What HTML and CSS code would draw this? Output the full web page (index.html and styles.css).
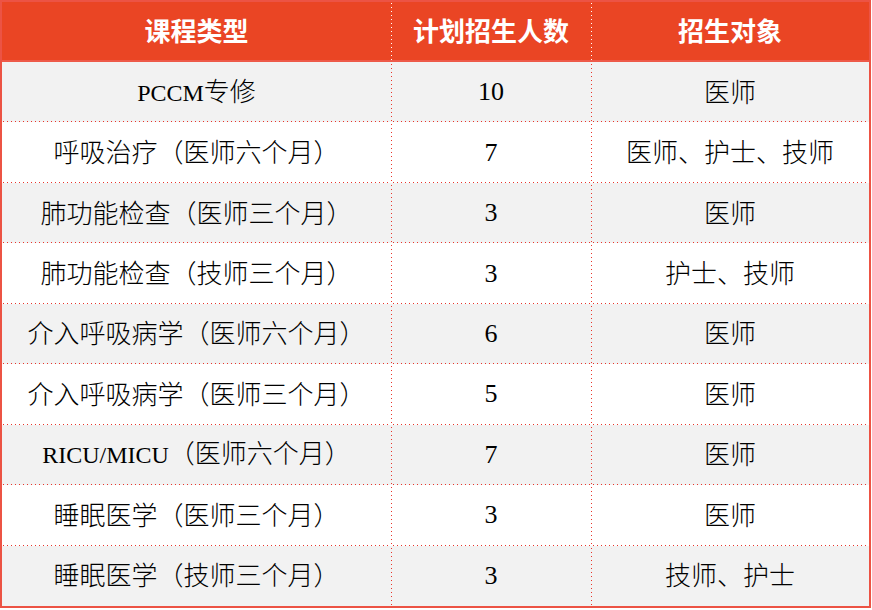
FILE: index.html
```html
<!DOCTYPE html>
<html lang="zh-CN">
<head>
<meta charset="utf-8">
<title>招生计划</title>
<link rel="stylesheet" href="styles.css">
</head>
<body>
<table class="plan">
  <colgroup>
    <col class="c1"><col class="c2"><col class="c3">
  </colgroup>
  <thead>
    <tr class="head">
      <th>课程类型</th>
      <th class="sep">计划招生人数</th>
      <th class="sep">招生对象</th>
    </tr>
  </thead>
  <tbody>
    <tr class="odd"><td><span class="lat">PCCM</span>专修</td><td class="sep"><span class="num">10</span></td><td class="sep">医师</td></tr>
    <tr class="even"><td>呼吸治疗（医师六个月）</td><td class="sep"><span class="num">7</span></td><td class="sep">医师、护士、技师</td></tr>
    <tr class="odd"><td>肺功能检查（医师三个月）</td><td class="sep"><span class="num">3</span></td><td class="sep">医师</td></tr>
    <tr class="even"><td>肺功能检查（技师三个月）</td><td class="sep"><span class="num">3</span></td><td class="sep">护士、技师</td></tr>
    <tr class="odd"><td>介入呼吸病学（医师六个月）</td><td class="sep"><span class="num">6</span></td><td class="sep">医师</td></tr>
    <tr class="even"><td>介入呼吸病学（医师三个月）</td><td class="sep"><span class="num">5</span></td><td class="sep">医师</td></tr>
    <tr class="odd"><td><span class="lat">RICU/MICU</span>（医师六个月）</td><td class="sep"><span class="num">7</span></td><td class="sep">医师</td></tr>
    <tr class="even"><td>睡眠医学（医师三个月）</td><td class="sep"><span class="num">3</span></td><td class="sep">医师</td></tr>
    <tr class="odd last"><td>睡眠医学（技师三个月）</td><td class="sep"><span class="num">3</span></td><td class="sep">技师、护士</td></tr>
  </tbody>
</table>
</body>
</html>
```
FILE: styles.css
```css
html, body {
  margin: 0;
  padding: 0;
  background: #ffffff;
}

.plan {
  width: 871px;
  table-layout: fixed;
  border-collapse: separate;
  border-spacing: 0;
  border: 2px solid #ec5344;
  font-family: "Noto Sans CJK SC", "Noto Sans", sans-serif;
  font-size: 26px;
  color: #000000;
}

.c1 { width: 389px; }
.c2 { width: 200px; }
.c3 { width: 278px; }

.plan th,
.plan td {
  padding: 0 0 3px 0;
  text-align: center;
  vertical-align: middle;
  line-height: 1;
  white-space: nowrap;
}

.head th {
  height: 55px;
  background-color: #ea4524;
  color: #ffffff;
  font-weight: 700;
  border-bottom: 2px solid #ee5a49;
}

.head th.sep {
  background-image: linear-gradient(to bottom, #ffffff 0 1px, transparent 1px 4px);
  background-size: 1px 4px;
  background-repeat: repeat-y;
  background-position: 0 1px;
}

.plan tbody tr {
  height: 60.44px;
}

.plan tbody td {
  font-weight: 300;
  background-image: linear-gradient(to right, #e8352b 0 1px, transparent 1px 4px);
  background-size: 4px 1px;
  background-repeat: repeat-x;
  background-position: 1px 100%;
}

.plan tbody td.sep {
  background-image:
    linear-gradient(to right, #e8352b 0 1px, transparent 1px 4px),
    linear-gradient(to bottom, #e8352b 0 1px, transparent 1px 4px);
  background-size: 4px 1px, 1px 4px;
  background-repeat: repeat-x, repeat-y;
  background-position: 2px 100%, 0 2px;
}

.plan tbody tr.last td {
  background-image: none;
}

.plan tbody tr.last td.sep {
  background-image: linear-gradient(to bottom, #e8352b 0 1px, transparent 1px 4px);
  background-size: 1px 4px;
  background-repeat: repeat-y;
  background-position: 0 2px;
}

.odd td { background-color: #f2f2f2; }
.even td { background-color: #ffffff; }

.lat {
  font-family: "Liberation Serif", serif;
  font-size: 24px;
  font-weight: 400;
}

.num {
  font-family: "Liberation Serif", serif;
  font-size: 26px;
  font-weight: 400;
}
```
